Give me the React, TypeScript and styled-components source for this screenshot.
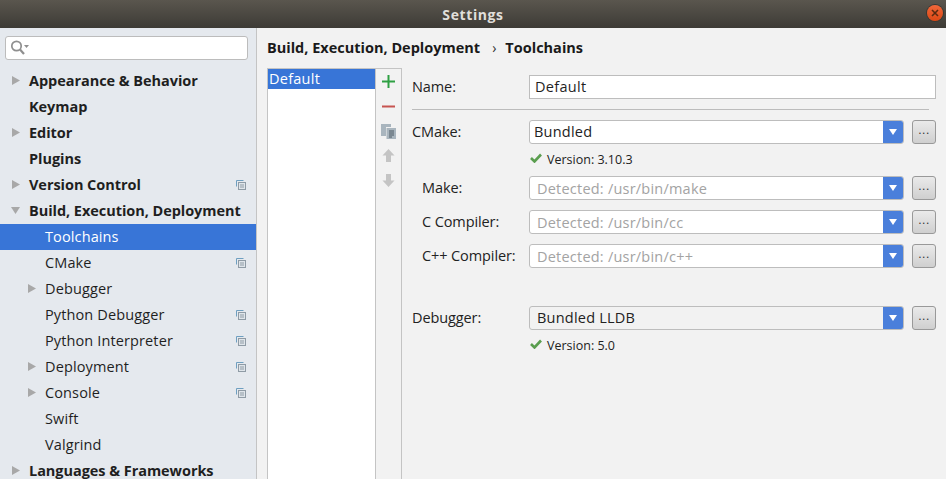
import React from "react";
import styled, { createGlobalStyle } from "styled-components";

const Global = createGlobalStyle`
  html, body { margin: 0; padding: 0; background: #f2f2f2; }
  body { font-family: "Open Sans", "Noto Sans", "Liberation Sans", sans-serif; color: #1f1f1f; }
`;

const Window = styled.div`
  width: 946px; height: 479px; overflow: hidden;
  display: flex; flex-direction: column; background: #f2f2f2;
`;
const TitleBar = styled.header`
  height: 28px; flex: none; display: flex; align-items: center; justify-content: center; position: relative;
  background: linear-gradient(#5a564e, #3d3b36);
  color: #e0dfdb; font-size: 14px; font-weight: 700; letter-spacing: 0.6px;
`;
const CloseButton = styled.span`
  position: absolute; right: 3px; top: 5px; width: 16px; height: 16px; border-radius: 50%;
  background: linear-gradient(#f0673a, #dd4814); display: flex; align-items: center; justify-content: center;
  box-shadow: 0 0 0 1px #3a3833;
`;
const Body = styled.div`
  flex: 1; min-height: 0; display: flex;
`;
const Sidebar = styled.aside`
  width: 256px; flex: none; background: #e5e9ee; border-right: 1px solid #c4c4c4;
  padding-top: 8px; overflow: hidden; box-sizing: content-box;
`;
const SearchBox = styled.div`
  margin: 0 8px 8px 5px; height: 24px; box-sizing: border-box; width: 243px;
  background: #fff; border: 1px solid #bcbcbc; border-radius: 3px;
  display: flex; align-items: center; padding-left: 4px;
`;
const Row = styled.div<{ $active?: boolean; $indent: number; $bold?: boolean }>`
  height: 26px; box-sizing: border-box; flex: none; display: flex; align-items: center; position: relative;
  padding-left: ${p => p.$indent}px; padding-bottom: 2px;
  background: ${p => (p.$active ? "#3875d7" : "transparent")};
  color: ${p => (p.$active ? "#fff" : "#1f1f1f")};
  font-size: 14.5px; font-weight: ${p => (p.$bold ? 700 : 400)};
  white-space: nowrap;
  letter-spacing: ${p => (p.$bold ? -0.05 : 0.12)}px;
`;
const Arrow = styled.svg`
  position: absolute; top: 8px; width: 12px; height: 12px; fill: #a8a8a8;
`;
const ProjectMark = styled.svg`
  position: absolute; right: 10px; top: 8px; width: 10px; height: 10px; fill: none;
`;
const Main = styled.main`
  flex: 1; min-width: 0; padding: 11px 10px 0 10px; display: flex; flex-direction: column;
`;
const Crumbs = styled.div`
  height: 19px; box-sizing: border-box; padding-bottom: 2px; margin-bottom: 10px; display: flex; align-items: center;
  font-size: 14.5px; font-weight: 700; color: #1a1a1a; white-space: nowrap;
`;
const Sep = styled.span`
  margin: 0 9px 0 12px; font-weight: 400; font-size: 14px; color: #333;
`;
const Split = styled.div`
  flex: 1; min-height: 0; display: flex;
`;
const ListPanel = styled.div`
  width: 135px; flex: none; box-sizing: border-box; display: flex;
  border: 1px solid #c4c4c4; border-bottom: none; margin-right: 10px;
`;
const List = styled.div`
  width: 107px; flex: none; background: #fff; border-right: 1px solid #c4c4c4;
`;
const ListItem = styled.div`
  height: 20px; box-sizing: border-box; background: #3875d7; color: #fff; font-size: 14.5px; display: flex; align-items: center;
  padding: 0 0 2px 1px; letter-spacing: 0.25px;
`;
const Tools = styled.div`
  flex: 1; display: flex; flex-direction: column; align-items: center; padding-right: 1px;
`;
const ToolSlot = styled.div<{ $up?: boolean }>`
  height: 25px; flex: none; display: flex; align-items: center; justify-content: center; width: 100%;
  padding-bottom: ${p => (p.$up ? 2 : 0)}px; box-sizing: border-box;
`;
const Form = styled.div`
  flex: 1; min-width: 0; padding-top: 7px; display: flex; flex-direction: column;
`;
const FormRow = styled.div<{ $mt?: number; $inset?: boolean }>`
  display: flex; align-items: center; height: 24px; margin-top: ${p => p.$mt ?? 0}px;
  padding-left: ${p => (p.$inset ? 10 : 0)}px;
`;
const Label = styled.label<{ $inset?: boolean }>`
  width: ${p => (p.$inset ? 107 : 117)}px; flex: none; font-size: 14.5px; color: #222; white-space: nowrap; letter-spacing: -0.1px;
  padding-bottom: 2px;
`;
const TextInput = styled.div`
  width: 407px; height: 24px; box-sizing: border-box; background: #fff; border: 1px solid #bdbdbd;
  font-size: 14.5px; padding: 0 0 2px 5px; display: flex; align-items: center; letter-spacing: 0.3px;
`;
const Divider = styled.div`
  height: 1px; background: #bcbcbc; width: 517px; margin-top: 10px;
`;
const Combo = styled.div<{ $flat?: boolean }>`
  width: 375px; height: 24px; box-sizing: border-box; display: flex; align-items: stretch;
  background: ${p => (p.$flat ? "#f2f2f2" : "#fff")};
  border: 1px solid #bdbdbd; border-radius: 3px; overflow: hidden;
`;
const ComboText = styled.span<{ $muted?: boolean; $pad: number }>`
  flex: 1; display: flex; align-items: center; padding: 0 0 ${p => (p.$muted ? 0 : 1)}px ${p => p.$pad}px; font-size: 14.5px; white-space: nowrap;
  color: ${p => (p.$muted ? "#a3a3a3" : "#222")}; letter-spacing: 0.22px;
`;
const ComboArrow = styled.span`
  width: 20px; flex: none; background: #4a7fdb; display: flex; align-items: center; justify-content: center;
`;
const More = styled.button`
  width: 24px; height: 24px; margin-left: 8px; padding: 0 0 4px; box-sizing: border-box; flex: none;
  border: 1px solid #999; border-radius: 3px; background: linear-gradient(#eaeaea, #cfcfcf);
  font: 12px "Liberation Sans", sans-serif; color: #333; letter-spacing: 0.5px;
`;
const Version = styled.div<{ $mt?: number }>`
  margin-left: 117px; margin-top: ${p => p.$mt ?? 0}px; height: 30px; display: flex; align-items: center; font-size: 12.5px; color: #222;
`;
const Check = styled.svg`
  width: 12px; height: 10px; margin: 0 5px 3px 1px; flex: none;
`;

const Tri = ({ open, left }: { open?: boolean; left: number }) => (
  <Arrow viewBox="0 0 12 12" style={{ left }}>
    <path d={open ? "M1 1h9L5.500 8z" : "M2 0l8 4.500-8 4.500z"} />
  </Arrow>
);
const Mark = () => (
  <ProjectMark viewBox="0 0 10 10">
    <path d="M.5 6.5v-6h7" stroke="#6f9fc0" />
    <rect x="2.5" y="2.5" width="7" height="7" fill="#dfe5ea" stroke="#8f9ba5" />
    <path d="M4 5h4M4 7h4" stroke="#8f9ba5" />
  </ProjectMark>
);

type Item = { t: string; bold?: boolean; arrow?: boolean; open?: boolean; mark?: boolean; sub?: boolean; active?: boolean };
const items: Item[] = [
  { t: "Appearance & Behavior", bold: true, arrow: true },
  { t: "Keymap", bold: true },
  { t: "Editor", bold: true, arrow: true },
  { t: "Plugins", bold: true },
  { t: "Version Control", bold: true, arrow: true, mark: true },
  { t: "Build, Execution, Deployment", bold: true, arrow: true, open: true },
  { t: "Toolchains", sub: true, active: true },
  { t: "CMake", sub: true, mark: true },
  { t: "Debugger", sub: true, arrow: true },
  { t: "Python Debugger", sub: true, mark: true },
  { t: "Python Interpreter", sub: true, mark: true },
  { t: "Deployment", sub: true, arrow: true, mark: true },
  { t: "Console", sub: true, arrow: true, mark: true },
  { t: "Swift", sub: true },
  { t: "Valgrind", sub: true },
  { t: "Languages & Frameworks", bold: true, arrow: true },
];

const DownArrow = () => (
  <svg width="8" height="6" viewBox="0 0 8 6"><path d="M0 0h8L4 6z" fill="#fff" /></svg>
);
const CheckMark = () => (
  <Check viewBox="0 0 12 10"><path d="M1 5l3.500 3.500L11 1.500" stroke="#5a9e4f" strokeWidth="2.600" fill="none" /></Check>
);
const ComboField = ({ text, muted, flat, pad }: { text: string; muted?: boolean; flat?: boolean; pad: number }) => (
  <>
    <Combo $flat={flat}>
      <ComboText $muted={muted} $pad={pad}>{text}</ComboText>
      <ComboArrow><DownArrow /></ComboArrow>
    </Combo>
    <More>...</More>
  </>
);

export default function App() {
  return (
    <Window>
      <Global />
      <TitleBar>
        Settings
        <CloseButton>
          <svg width="8" height="8" viewBox="0 0 8 8"><path d="M1 1l6 6M7 1l-6 6" stroke="#5a2a10" strokeWidth="1.6" /></svg>
        </CloseButton>
      </TitleBar>
      <Body>
        <Sidebar>
          <SearchBox>
            <svg width="20" height="16" viewBox="0 0 20 16" fill="none">
              <circle cx="6.500" cy="6" r="4.700" stroke="#8f8f8f" strokeWidth="1.700" />
              <path d="M10 9.500l4 4.500" stroke="#8f8f8f" strokeWidth="2.200" />
              <path d="M14 5h5l-2.500 3z" fill="#8f8f8f" />
            </svg>
          </SearchBox>
          {items.map(i => (
            <Row key={i.t} $bold={i.bold} $active={i.active} $indent={i.sub ? 45 : 29}>
              {i.arrow && <Tri open={i.open} left={i.sub ? 26 : 10} />}
              {i.t}
              {i.mark && <Mark />}
            </Row>
          ))}
        </Sidebar>
        <Main>
          <Crumbs>
            Build, Execution, Deployment<Sep>›</Sep>Toolchains
          </Crumbs>
          <Split>
            <ListPanel>
              <List><ListItem>Default</ListItem></List>
              <Tools>
                <ToolSlot>
                  <svg width="13" height="13" viewBox="0 0 13 13"><path d="M6.500 0v13M0 6.500h13" stroke="#2ea043" strokeWidth="2" /></svg>
                </ToolSlot>
                <ToolSlot>
                  <svg width="13" height="13" viewBox="0 0 13 13"><path d="M0 6.500h13" stroke="#c75450" strokeWidth="2" /></svg>
                </ToolSlot>
                <ToolSlot>
                  <svg width="15" height="15" viewBox="0 0 15 15">
                    <path d="M0 0h10v3H5v9H0z" fill="#a9b5be" />
                    <rect x="5.500" y="4" width="9.500" height="11" fill="#a9b5be" />
                    <path d="M8 7h5M8 9h5M8 11h5M8 13h3" stroke="#4d5a64" />
                  </svg>
                </ToolSlot>
                <ToolSlot $up>
                  <svg width="13" height="13" viewBox="0 0 13 13"><path d="M6.500 0l6 6.500H9v6.500H4V6.500H.5z" fill="#c4c4c4" /></svg>
                </ToolSlot>
                <ToolSlot $up>
                  <svg width="13" height="13" viewBox="0 0 13 13"><path d="M6.500 13l6-6.500H9V0H4v6.500H.5z" fill="#c4c4c4" /></svg>
                </ToolSlot>
              </Tools>
            </ListPanel>
            <Form>
              <FormRow><Label>Name:</Label><TextInput>Default</TextInput></FormRow>
              <Divider />
              <FormRow $mt={10}><Label>CMake:</Label><ComboField text="Bundled" pad={4} /></FormRow>
              <Version $mt={0}><CheckMark />Version: 3.10.3</Version>
              <FormRow $mt={2} $inset><Label $inset>Make:</Label><ComboField text="Detected: /usr/bin/make" muted pad={7} /></FormRow>
              <FormRow $mt={10} $inset><Label $inset>C Compiler:</Label><ComboField text="Detected: /usr/bin/cc" muted pad={7} /></FormRow>
              <FormRow $mt={10} $inset><Label $inset>C++ Compiler:</Label><ComboField text="Detected: /usr/bin/c++" muted pad={7} /></FormRow>
              <FormRow $mt={38}><Label>Debugger:</Label><ComboField text="Bundled LLDB" flat pad={7} /></FormRow>
              <Version><CheckMark />Version: 5.0</Version>
            </Form>
          </Split>
        </Main>
      </Body>
    </Window>
  );
}
